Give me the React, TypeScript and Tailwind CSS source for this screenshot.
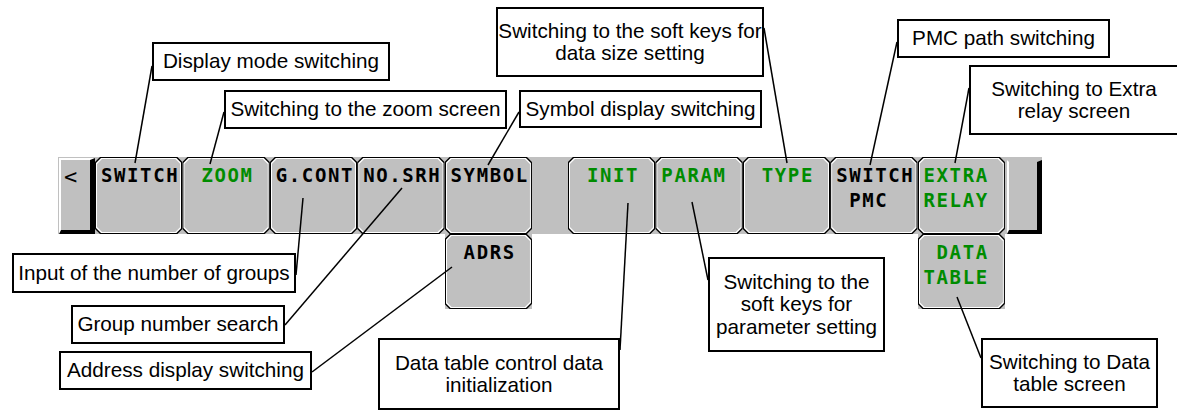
const OCT =
  "[clip-path:polygon(5px_0,calc(100%_-_5px)_0,100%_5px,100%_calc(100%_-_5px),calc(100%_-_5px)_100%,5px_100%,0_calc(100%_-_5px),0_5px)]";

type KeyProps = { lines: string[]; green?: boolean; className?: string };

function Key({ lines, green, className = "" }: KeyProps) {
  return (
    <div className={`h-full bg-[#c0c0c0] ${className}`}>
      <div className={`h-full bg-black p-px ${OCT}`}>
        <div className={`h-full bg-white p-px ${OCT}`}>
          <div
            className={`h-full bg-[#c0c0c0] pl-[4px] pt-[4px] ${OCT} whitespace-pre font-['DejaVu_Sans_Mono',monospace] text-[19px] font-bold leading-[25px] tracking-[1.6px] ${
              green ? "text-[#008c00]" : "text-black"
            }`}
          >
            {lines.map((l) => (
              <div key={l}>{l}</div>
            ))}
          </div>
        </div>
      </div>
    </div>
  );
}

const callouts = [
  { x: 152, y: 42, w: 238, h: 39, text: ["Display mode switching"] },
  { x: 224, y: 90, w: 283, h: 39, text: ["Switching to the zoom screen"] },
  { x: 519, y: 90, w: 243, h: 38, text: ["Symbol display switching"] },
  { x: 496, y: 7, w: 268, h: 70, text: ["Switching to the soft keys for", "data size setting"] },
  { x: 897, y: 19, w: 213, h: 39, text: ["PMC path switching"] },
  { x: 969, y: 65, w: 210, h: 70, text: ["Switching to Extra", "relay screen"] },
  { x: 12, y: 253, w: 284, h: 40, text: ["Input of the number of groups"] },
  { x: 71, y: 305, w: 214, h: 39, text: ["Group number search"] },
  { x: 59, y: 351, w: 253, h: 39, text: ["Address display switching"] },
  { x: 378, y: 338, w: 242, h: 72, text: ["Data table control data", "initialization"] },
  { x: 708, y: 257, w: 177, h: 95, text: ["Switching to the", "soft keys for", "parameter setting"] },
  { x: 981, y: 338, w: 177, h: 70, text: ["Switching to Data", "table screen"] },
];

// leader lines: callout edge -> soft key
const leaders = [
  [152, 66, 135, 163],
  [224, 112, 210, 164],
  [519, 112, 488, 165],
  [764, 28, 787, 163],
  [897, 42, 870, 165],
  [969, 88, 955, 163],
  [296, 275, 303, 198],
  [285, 325, 402, 188],
  [312, 372, 452, 267],
  [620, 350, 628, 203],
  [708, 280, 692, 202],
  [981, 358, 957, 297],
];

export default function App() {
  return (
    <div className="relative h-[412px] w-[1177px] overflow-hidden bg-white font-['Liberation_Sans',Arial,sans-serif] text-black">
      {/* soft key bar */}
      <div className="ml-[58px] pt-[157px]">
        <div className="grid grid-cols-[37px_repeat(5,87.4px)_36px_repeat(5,87.4px)_37px] grid-rows-[77px_75px]">
          <div className="h-full bg-[#c0c0c0] pl-px pt-px">
            <div className="h-full border-b-[4px] border-l-2 border-r-[5px] border-t-2 border-b-black border-l-white border-r-black border-t-white bg-[#c0c0c0] pl-[3px] pt-[4px] font-['DejaVu_Sans_Mono',monospace] text-[22px] leading-[26px]">
              &lt;
            </div>
          </div>
          <Key lines={["SWITCH"]} />
          <Key lines={[" ZOOM"]} green />
          <Key lines={["G.CONT"]} />
          <Key lines={["NO.SRH"]} />
          <Key lines={["SYMBOL"]} />
          <div className="h-full bg-[#c0c0c0]" />
          <Key lines={[" INIT"]} green />
          <Key lines={["PARAM"]} green />
          <Key lines={[" TYPE"]} green />
          <Key lines={["SWITCH", " PMC"]} />
          <Key lines={["EXTRA", "RELAY"]} green />
          <div className="h-full bg-[#c0c0c0] pl-[2px] pt-[3px]">
            <div className="h-full border-b-[4px] border-l-2 border-r-[5px] border-t-2 border-b-black border-l-white border-r-black border-t-[#c0c0c0] bg-[#c0c0c0]" />
          </div>
          <Key lines={[" ADRS"]} className="col-start-6 row-start-2" />
          <Key lines={[" DATA", "TABLE"]} green className="col-start-12 row-start-2" />
        </div>
      </div>

      <svg className="pointer-events-none absolute inset-0" width="1177" height="412">
        {leaders.map(([x1, y1, x2, y2], i) => (
          <line key={i} x1={x1} y1={y1} x2={x2} y2={y2} stroke="black" strokeWidth="1.5" />
        ))}
      </svg>

      {callouts.map((c) => (
        <div
          key={c.text[0] + c.x}
          className="absolute flex flex-col items-center justify-center whitespace-nowrap border-2 border-black bg-white text-center text-[20.7px] leading-[22.5px]"
          style={{ left: c.x, top: c.y, width: c.w, height: c.h }}
        >
          {c.text.map((t) => (
            <div key={t}>{t}</div>
          ))}
        </div>
      ))}
    </div>
  );
}
